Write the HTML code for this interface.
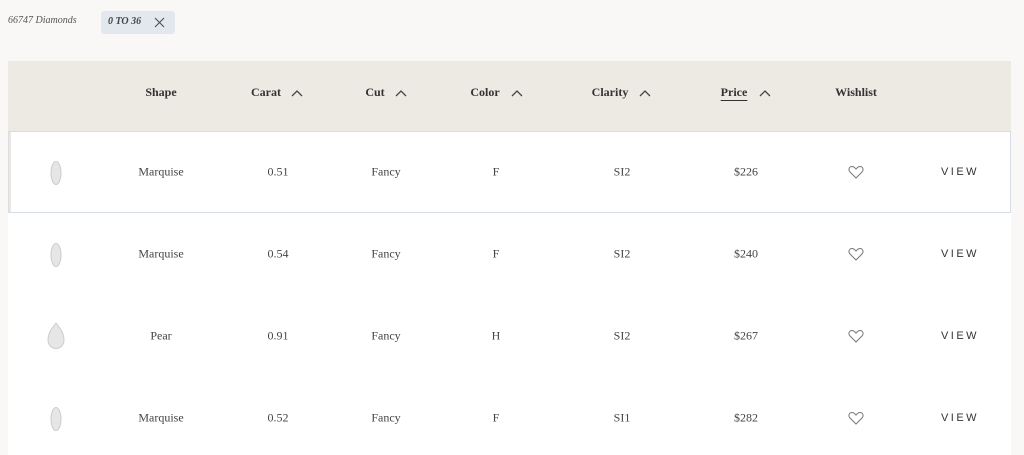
<!DOCTYPE html>
<html><head><style>
body{margin:0;width:1024px;height:455px;background:#f9f8f6;font-family:"Liberation Serif",serif;color:#333;position:relative;overflow:hidden}
.a{position:absolute}
.cnt{left:8px;top:15px;font-size:10px;font-style:italic;color:#555}
.chip{left:101px;top:11px;width:74px;height:23px;background:#e3e8ee;border-radius:3px}
.chip span{position:absolute;left:7px;top:5px;font-size:10px;font-style:italic;font-weight:bold;color:#444}
.hd{left:8px;top:61px;width:1003px;height:70px;background:#edeae4}
.row{left:8px;width:1003px;height:82px;background:#fff}
.h{font-size:12px;font-weight:bold;color:#333;top:85px;transform:translateX(-50%);white-space:nowrap}
.c{font-size:12px;color:#444;transform:translate(-50%,-50%);white-space:nowrap}
.v{font-family:"Liberation Sans",sans-serif;letter-spacing:2.5px;font-size:11px;color:#333}
</style></head><body>
<div class="a cnt">66747 Diamonds</div>
<div class="a chip"><span>0 TO 36</span><svg class="a" style="left:53px;top:6px" width="11" height="11" viewBox="0 0 11 11"><path d="M1 1L10 10M10 1L1 10" stroke="#555" stroke-width="1.2"/></svg></div>
<div class="a hd"></div>
<div class="a h" style="left:161px">Shape</div>
<div class="a h" style="left:266px">Carat</div>
<div class="a h" style="left:375px">Cut</div>
<div class="a h" style="left:485px">Color</div>
<div class="a h" style="left:610px">Clarity</div>
<div class="a h" style="left:734px;text-decoration:underline;text-underline-offset:4px">Price</div>
<div class="a h" style="left:856px">Wishlist</div>
<svg class="a" style="left:0;top:0" width="1024" height="120"><g fill="none" stroke="#444" stroke-width="1.3"><path d="M292 96l5-5 5 5"/><path d="M396 96l5-5 5 5"/><path d="M512 96l5-5 5 5"/><path d="M640 96l5-5 5 5"/><path d="M760 96l5-5 5 5"/></g></svg>
<div class="a row" style="top:131px;height:80px;border:1px solid #d6dde8;width:1001px"></div>
<div class="a" style="left:9px;top:132px;width:2px;height:80px;background:#f1e6da"></div>
<div class="a row" style="top:213px"></div>
<div class="a row" style="top:295px"></div>
<div class="a row" style="top:377px;height:78px"></div>
<svg class="a" style="left:50px;top:160px" width="12" height="26"><ellipse cx="6" cy="13" rx="5" ry="11.5" fill="#e6e6e6" stroke="#ccc"/></svg>
<div class="a c" style="left:161px;top:172px">Marquise</div><div class="a c" style="left:278px;top:172px">0.51</div><div class="a c" style="left:386px;top:172px">Fancy</div><div class="a c" style="left:496px;top:172px">F</div><div class="a c" style="left:622px;top:172px">SI2</div><div class="a c" style="left:746px;top:172px">$226</div>
<svg class="a" style="left:848px;top:165px" width="16" height="14" viewBox="0 0 16 14"><path d="M8 13L2 7C0 5 1 1.5 4 1.5C6 1.5 7 3 8 4C9 3 10 1.5 12 1.5C15 1.5 16 5 14 7Z" fill="none" stroke="#777"/></svg>
<div class="a c v" style="left:960px;top:172px">VIEW</div>
<svg class="a" style="left:50px;top:242px" width="12" height="26"><ellipse cx="6" cy="13" rx="5" ry="11.5" fill="#e6e6e6" stroke="#ccc"/></svg>
<div class="a c" style="left:161px;top:254px">Marquise</div><div class="a c" style="left:278px;top:254px">0.54</div><div class="a c" style="left:386px;top:254px">Fancy</div><div class="a c" style="left:496px;top:254px">F</div><div class="a c" style="left:622px;top:254px">SI2</div><div class="a c" style="left:746px;top:254px">$240</div>
<svg class="a" style="left:848px;top:247px" width="16" height="14" viewBox="0 0 16 14"><path d="M8 13L2 7C0 5 1 1.5 4 1.5C6 1.5 7 3 8 4C9 3 10 1.5 12 1.5C15 1.5 16 5 14 7Z" fill="none" stroke="#777"/></svg>
<div class="a c v" style="left:960px;top:254px">VIEW</div>
<svg class="a" style="left:47px;top:322px" width="18" height="28"><path d="M9 1C13 6 17 11 17 18A8 8.5 0 0 1 1 18C1 11 5 6 9 1Z" fill="#e6e6e6" stroke="#ccc"/></svg>
<div class="a c" style="left:161px;top:336px">Pear</div><div class="a c" style="left:278px;top:336px">0.91</div><div class="a c" style="left:386px;top:336px">Fancy</div><div class="a c" style="left:496px;top:336px">H</div><div class="a c" style="left:622px;top:336px">SI2</div><div class="a c" style="left:746px;top:336px">$267</div>
<svg class="a" style="left:848px;top:329px" width="16" height="14" viewBox="0 0 16 14"><path d="M8 13L2 7C0 5 1 1.5 4 1.5C6 1.5 7 3 8 4C9 3 10 1.5 12 1.5C15 1.5 16 5 14 7Z" fill="none" stroke="#777"/></svg>
<div class="a c v" style="left:960px;top:336px">VIEW</div>
<svg class="a" style="left:50px;top:406px" width="12" height="26"><ellipse cx="6" cy="13" rx="5" ry="11.5" fill="#e6e6e6" stroke="#ccc"/></svg>
<div class="a c" style="left:161px;top:418px">Marquise</div><div class="a c" style="left:278px;top:418px">0.52</div><div class="a c" style="left:386px;top:418px">Fancy</div><div class="a c" style="left:496px;top:418px">F</div><div class="a c" style="left:622px;top:418px">SI1</div><div class="a c" style="left:746px;top:418px">$282</div>
<svg class="a" style="left:848px;top:411px" width="16" height="14" viewBox="0 0 16 14"><path d="M8 13L2 7C0 5 1 1.5 4 1.5C6 1.5 7 3 8 4C9 3 10 1.5 12 1.5C15 1.5 16 5 14 7Z" fill="none" stroke="#777"/></svg>
<div class="a c v" style="left:960px;top:418px">VIEW</div>
</body></html>
